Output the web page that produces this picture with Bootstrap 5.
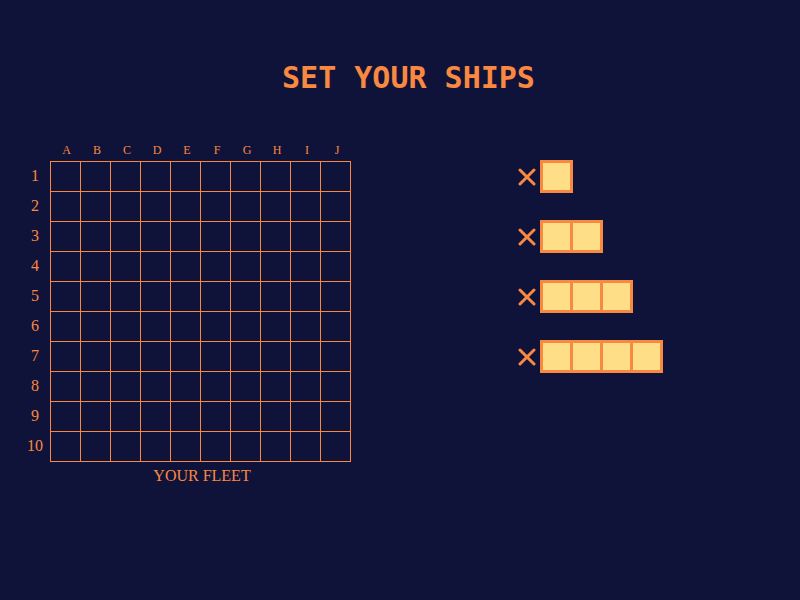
<!DOCTYPE html>
<html lang="en">
<head>
<meta charset="utf-8">
<meta name="viewport" content="width=device-width, initial-scale=1">
<title>Set your ships</title>
<link href="https://cdn.jsdelivr.net/npm/bootstrap@5.3.0/dist/css/bootstrap.min.css" rel="stylesheet">
<style>
  body { background: #101339; color: #f98840; font-family: "Liberation Serif", serif; }
  .page-title { font: bold 30px/36px "DejaVu Sans Mono", monospace; margin: 60px 0 44px; padding-left: 17px; }
  .board-side { padding-left: 20px; }
  .board { border-collapse: separate; border-spacing: 0; table-layout: fixed; width: 331px; }
  .board th { font-weight: 400; text-align: center; padding: 0; }
  .board .label-col { width: 30px; }
  .board .first-col { width: 31px; }
  .board thead th { font-size: 12px; line-height: 20px; height: 21px; vertical-align: top; padding-left: 2px; }
  .board tbody th { font-size: 16px; line-height: 28px; height: 30px; vertical-align: top; }
  .board td { border-style: solid; border-color: #f98840; border-width: 0 1px 1px 0; padding: 0; }
  .board td:nth-child(2) { border-left-width: 1px; }
  .board tbody tr:first-child td { border-top-width: 1px; }
  .board tbody tr:first-child th { height: 31px; line-height: 29px; }
  .board caption { caption-side: bottom; color: inherit; font-size: 16px; line-height: 20px; padding: 4px 0 0 33px; text-align: center; }
  .fleet-side { padding-left: 118px; padding-top: 20px; }
  .fleet { gap: 27px; }
  .times { width: 18px; height: 18px; margin-right: 4px; }
  .ship { border: 3px solid #f98840; background: #f98840; gap: 3px; }
  .deck { width: 27px; height: 27px; background: #fedf88; }
</style>
<script src="https://cdn.jsdelivr.net/npm/bootstrap@5.3.0/dist/js/bootstrap.bundle.min.js"></script>
</head>
<body>
<svg class="d-none" aria-hidden="true">
  <symbol id="cross" viewBox="0 0 18 18"><path d="M2 2 16 16M16 2 2 16" fill="none" stroke="#f98840" stroke-width="3" stroke-linecap="round"/></symbol>
</svg>
<main class="container-fluid p-0 overflow-hidden">
  <h1 class="page-title text-center">SET YOUR SHIPS</h1>
  <div class="row g-0">
    <section class="col-6 board-side">
      <table class="board">
        <caption>YOUR FLEET</caption>
        <colgroup><col class="label-col"><col class="first-col"><col span="9"></colgroup>
        <thead>
          <tr><th></th><th scope="col">A</th><th scope="col">B</th><th scope="col">C</th><th scope="col">D</th><th scope="col">E</th><th scope="col">F</th><th scope="col">G</th><th scope="col">H</th><th scope="col">I</th><th scope="col">J</th></tr>
        </thead>
        <tbody>
          <tr><th scope="row">1</th><td></td><td></td><td></td><td></td><td></td><td></td><td></td><td></td><td></td><td></td></tr>
          <tr><th scope="row">2</th><td></td><td></td><td></td><td></td><td></td><td></td><td></td><td></td><td></td><td></td></tr>
          <tr><th scope="row">3</th><td></td><td></td><td></td><td></td><td></td><td></td><td></td><td></td><td></td><td></td></tr>
          <tr><th scope="row">4</th><td></td><td></td><td></td><td></td><td></td><td></td><td></td><td></td><td></td><td></td></tr>
          <tr><th scope="row">5</th><td></td><td></td><td></td><td></td><td></td><td></td><td></td><td></td><td></td><td></td></tr>
          <tr><th scope="row">6</th><td></td><td></td><td></td><td></td><td></td><td></td><td></td><td></td><td></td><td></td></tr>
          <tr><th scope="row">7</th><td></td><td></td><td></td><td></td><td></td><td></td><td></td><td></td><td></td><td></td></tr>
          <tr><th scope="row">8</th><td></td><td></td><td></td><td></td><td></td><td></td><td></td><td></td><td></td><td></td></tr>
          <tr><th scope="row">9</th><td></td><td></td><td></td><td></td><td></td><td></td><td></td><td></td><td></td><td></td></tr>
          <tr><th scope="row">10</th><td></td><td></td><td></td><td></td><td></td><td></td><td></td><td></td><td></td><td></td></tr>
        </tbody>
      </table>
    </section>
    <section class="col-6 fleet-side">
      <ul class="fleet list-unstyled d-flex flex-column mb-0">
        <li class="d-flex align-items-center"><svg class="times flex-shrink-0"><use href="#cross"/></svg><div class="ship d-flex"><span class="deck"></span></div></li>
        <li class="d-flex align-items-center"><svg class="times flex-shrink-0"><use href="#cross"/></svg><div class="ship d-flex"><span class="deck"></span><span class="deck"></span></div></li>
        <li class="d-flex align-items-center"><svg class="times flex-shrink-0"><use href="#cross"/></svg><div class="ship d-flex"><span class="deck"></span><span class="deck"></span><span class="deck"></span></div></li>
        <li class="d-flex align-items-center"><svg class="times flex-shrink-0"><use href="#cross"/></svg><div class="ship d-flex"><span class="deck"></span><span class="deck"></span><span class="deck"></span><span class="deck"></span></div></li>
      </ul>
    </section>
  </div>
</main>
</body>
</html>
